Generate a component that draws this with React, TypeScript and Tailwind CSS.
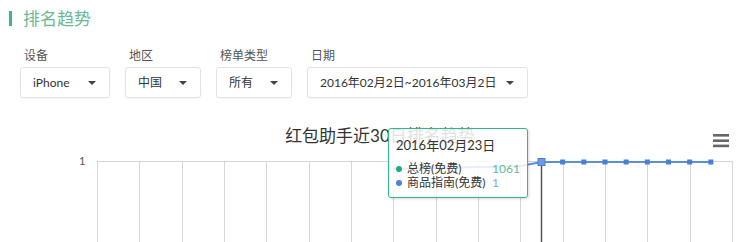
import React from 'react';

const FONT = "font-['Lato','Noto_Sans_CJK_SC',sans-serif]";

const filters = [
  { label: '设备', value: 'iPhone', width: 'w-[90px]' },
  { label: '地区', value: '中国', width: 'w-[76px]' },
  { label: '榜单类型', value: '所有', width: 'w-[76px]' },
  { label: '日期', value: '2016年02月2日~2016年03月2日', width: 'w-[221px]' },
];

function Caret() {
  return (
    <svg width="8" height="4" viewBox="0 0 8 4" className="shrink-0">
      <path d="M0 0 L8 0 L4 4 Z" fill="#444" />
    </svg>
  );
}

// plot geometry (svg coords, svg top = page y 110)
const PLOT_LEFT = 97;
const PLOT_RIGHT = 732;
const PLOT_TOP = 51;
const STEP = (PLOT_RIGHT - PLOT_LEFT) / 30;

function Chart() {
  const grid = Array.from({ length: 16 }, (_, i) => PLOT_LEFT + i * 2 * STEP);
  const points = Array.from({ length: 9 }, (_, i) => PLOT_LEFT + (21 + i) * STEP);
  const y = PLOT_TOP + 1;

  return (
    <svg width="740" height="132" viewBox="0 0 740 132" className="block">
      <text x="380" y="32" textAnchor="middle" fontSize="17" fill="#333" fontFamily="Lato, 'Noto Sans CJK SC', sans-serif">
        红包助手近30日排名趋势
      </text>

      {/* menu */}
      <rect x="713" y="24" width="16" height="2.6" fill="#666" />
      <rect x="713" y="29.4" width="16" height="2.6" fill="#666" />
      <rect x="713" y="34.6" width="16" height="2.6" fill="#666" />

      <text x="79" y="55" fontSize="11" fill="#555" fontFamily="Lato, sans-serif">1</text>

      <line x1={PLOT_LEFT} y1={PLOT_TOP + 0.5} x2={PLOT_RIGHT} y2={PLOT_TOP + 0.5} stroke="#d6d6d6" />
      {grid.map((x) => (
        <line key={x} x1={Math.round(x) + 0.5} y1={PLOT_TOP} x2={Math.round(x) + 0.5} y2={132} stroke="#d6d6d6" />
      ))}

      {/* crosshair */}
      <line x1={541.5} y1={y} x2={541.5} y2={132} stroke="#555" strokeWidth="1.5" />

      <polyline
        points={`393,59 ${PLOT_LEFT + 20 * STEP},56 ${points.map((x) => `${x},${y}`).join(' ')}`}
        fill="none"
        stroke="#5b8edb"
        strokeWidth="2"
      />
      {points.map((x, i) =>
        i === 0 ? (
          <rect key={x} x={x - 3.5} y={y - 3.5} width="7" height="7" fill="#6d9be3" stroke="#4a7fd6" strokeWidth="1" />
        ) : (
          <rect key={x} x={x - 2.5} y={y - 2.5} width="5" height="5" fill="#4a7fd6" />
        )
      )}
    </svg>
  );
}

export default function App() {
  return (
    <div className={`w-[740px] h-[242px] overflow-hidden bg-white text-[#333] ${FONT}`}>
      {/* header */}
      <div className="flex items-center pl-[9px] pt-[10px] h-[27px]">
        <span className="w-[3px] h-[15px] bg-[#3db58b]" />
        <span className="ml-[11px] text-[17px] leading-[17px] text-[#6cb996]">排名趋势</span>
      </div>

      {/* filters */}
      <div className="flex gap-[15px] pl-[20px] mt-[21px]">
        {filters.map((f) => (
          <div key={f.label} className="flex flex-col">
            <span className="pl-[4px] text-[12px] leading-[16px] text-[#555]">{f.label}</span>
            <div
              className={`${f.width} mt-[3px] h-[31px] flex items-center justify-between pl-[12px] pr-[13px] border border-[#e2e2e2] rounded-[3px] shadow-[0_1px_2px_rgba(0,0,0,0.04)] text-[12px]`}
            >
              <span className="whitespace-nowrap">{f.value}</span>
              <Caret />
            </div>
          </div>
        ))}
      </div>

      {/* chart */}
      <div className="relative mt-[12px]">
        <Chart />
        <div className="absolute left-[388px] top-[18px] w-[140px] h-[70px] bg-[rgba(255,255,255,0.85)] border border-[#2fb88a] rounded-[3px] shadow-[1px_1px_3px_rgba(0,0,0,0.15)] px-[7px] pt-[9px] text-[12px] leading-[14px]">
          <div className="text-[13px]">2016年02月23日</div>
          <div className="mt-[10px] flex items-center">
            <span className="w-[6px] h-[6px] rounded-full bg-[#1aae7e] mr-[5px]" />
            <span className="w-[85px]">总榜(免费)</span>
            <span className="text-[#5cbf9a]">1061</span>
          </div>
          <div className="flex items-center">
            <span className="w-[6px] h-[6px] rounded-full bg-[#4a84d8] mr-[5px]" />
            <span className="w-[85px]">商品指南(免费)</span>
            <span className="text-[#7ea4e2]">1</span>
          </div>
        </div>
      </div>
    </div>
  );
}
